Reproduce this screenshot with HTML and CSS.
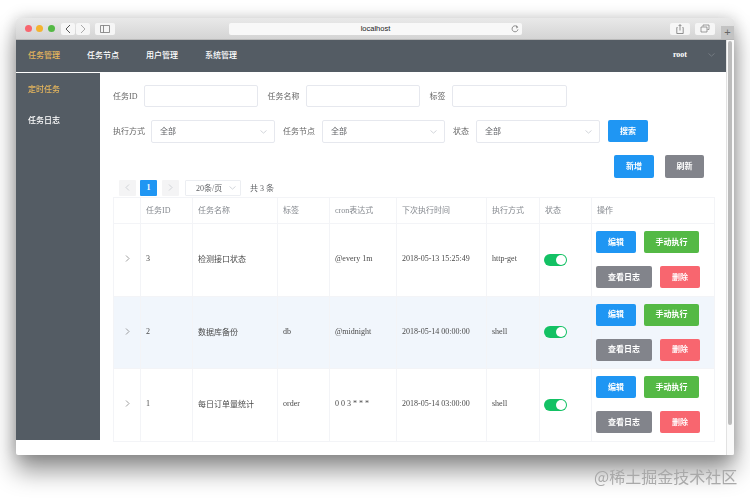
FILE: index.html
```html
<!DOCTYPE html>
<html lang="zh">
<head>
<meta charset="utf-8">
<title>localhost</title>
<link rel="stylesheet" href="styles.css">
</head>
<body>
<div class="window">
  <header class="chrome">
    <div class="lights"><i class="red"></i><i class="amber"></i><i class="green"></i></div>
    <div class="navpair">
      <span class="cbtn nb"><svg width="8" height="10" viewBox="0 0 8 10"><path d="M6 1 2 5l4 4" fill="none" stroke="#555" stroke-width="1"/></svg></span>
      <span class="cbtn nb"><svg width="8" height="10" viewBox="0 0 8 10"><path d="M2 1l4 4-4 4" fill="none" stroke="#aaa" stroke-width="1"/></svg></span>
    </div>
    <span class="cbtn sb"><svg width="10" height="8" viewBox="0 0 10 8"><path d="M.5.5h9v7h-9zM3.500.5v7" fill="none" stroke="#777" stroke-width=".8"/></svg></span>
    <div class="url"><span class="urltext">localhost</span>
      <svg class="reload" width="8" height="8" viewBox="0 0 8 8"><path d="M6.600 2.200A3 3 0 1 0 7 4.400M5 .8l1.700 1.400L5 3" fill="none" stroke="#666" stroke-width=".7"/></svg>
    </div>
    <span class="cbtn rb"><svg width="8" height="10" viewBox="0 0 8 10"><path d="M1.500 3.500H.8v6h6.400v-6h-.7M4 6.500V.8M2.600 2 4 .6 5.400 2" fill="none" stroke="#666" stroke-width=".7"/></svg></span>
    <span class="cbtn rb"><svg width="10" height="9" viewBox="0 0 10 9"><path d="M3 2.500V1h6v4.500H7.500M1 3h6v5H1z" fill="none" stroke="#777" stroke-width=".7"/></svg></span>
    <span class="plus">+</span>
  </header>
  <div class="viewport">
    <div class="app">
      <nav class="topnav">
        <a class="tab on">任务管理</a><a class="tab">任务节点</a><a class="tab">用户管理</a><a class="tab">系统管理</a>
        <span class="user">root</span>
        <svg class="userarrow" width="7" height="4" viewBox="0 0 7 4"><path d="M.5.5l3 2.600 3-2.600" fill="none" stroke="#8a9096" stroke-width=".6"/></svg>
      </nav>
      <div class="body">
        <aside class="side">
          <a class="sitem on">定时任务</a>
          <a class="sitem">任务日志</a>
        </aside>
        <main class="main">
          <div class="frow r1">
            <label>任务ID</label><span class="input w114"></span>
            <label>任务名称</label><span class="input w114"></span>
            <label>标签</label><span class="input w115"></span>
          </div>
          <div class="frow r2">
            <label>执行方式</label><span class="input sel w124"><span>全部</span><svg width="7" height="4" viewBox="0 0 7 4"><path d="M.5.5l3 2.600 3-2.600" fill="none" stroke="#c0c4cc" stroke-width=".7"/></svg></span>
            <label>任务节点</label><span class="input sel w123"><span>全部</span><svg width="7" height="4" viewBox="0 0 7 4"><path d="M.5.5l3 2.600 3-2.600" fill="none" stroke="#c0c4cc" stroke-width=".7"/></svg></span>
            <label>状态</label><span class="input sel w124"><span>全部</span><svg width="7" height="4" viewBox="0 0 7 4"><path d="M.5.5l3 2.600 3-2.600" fill="none" stroke="#c0c4cc" stroke-width=".7"/></svg></span>
            <button class="btn blue search">搜索</button>
          </div>
          <div class="actions">
            <button class="btn blue">新增</button><button class="btn gray narrow">刷新</button>
          </div>
          <div class="pager">
            <span class="pg dis"><svg width="5" height="7" viewBox="0 0 5 7"><path d="M4 .5l-3 3 3 3" fill="none" stroke="#c0c4cc" stroke-width=".7"/></svg></span>
            <span class="pg cur">1</span>
            <span class="pg dis"><svg width="5" height="7" viewBox="0 0 5 7"><path d="M1 .5l3 3-3 3" fill="none" stroke="#c0c4cc" stroke-width=".7"/></svg></span>
            <span class="size">20条/页<svg width="7" height="4" viewBox="0 0 7 4"><path d="M.5.5l3 2.600 3-2.600" fill="none" stroke="#c0c4cc" stroke-width=".7"/></svg></span>
            <span class="total">共 3 条</span>
          </div>
          <table class="grid">
            <colgroup><col class="c1"><col class="c2"><col class="c3"><col class="c4"><col class="c5"><col class="c6"><col class="c7"><col class="c8"><col class="c9"></colgroup>
            <thead><tr><th></th><th>任务ID</th><th>任务名称</th><th>标签</th><th>cron表达式</th><th>下次执行时间</th><th>执行方式</th><th>状态</th><th>操作</th></tr></thead>
            <tbody>
              <tr>
                <td class="exp"><svg width="5" height="7" viewBox="0 0 5 7"><path d="M1 .5l3 3-3 3" fill="none" stroke="#777" stroke-width=".7"/></svg></td>
                <td>3</td><td>检测接口状态</td><td></td><td>@every 1m</td><td>2018-05-13 15:25:49</td><td>http-get</td>
                <td><span class="switch"></span></td>
                <td class="ops"><div class="oprow"><button class="btn blue">编辑</button><button class="btn green">手动执行</button></div><div class="oprow"><button class="btn gray wide">查看日志</button><button class="btn red">删除</button></div></td>
              </tr>
              <tr class="hover">
                <td class="exp"><svg width="5" height="7" viewBox="0 0 5 7"><path d="M1 .5l3 3-3 3" fill="none" stroke="#777" stroke-width=".7"/></svg></td>
                <td>2</td><td>数据库备份</td><td>db</td><td>@midnight</td><td>2018-05-14 00:00:00</td><td>shell</td>
                <td><span class="switch"></span></td>
                <td class="ops"><div class="oprow"><button class="btn blue">编辑</button><button class="btn green">手动执行</button></div><div class="oprow"><button class="btn gray wide">查看日志</button><button class="btn red">删除</button></div></td>
              </tr>
              <tr>
                <td class="exp"><svg width="5" height="7" viewBox="0 0 5 7"><path d="M1 .5l3 3-3 3" fill="none" stroke="#777" stroke-width=".7"/></svg></td>
                <td>1</td><td>每日订单量统计</td><td>order</td><td>0 0 3 * * *</td><td>2018-05-14 03:00:00</td><td>shell</td>
                <td><span class="switch"></span></td>
                <td class="ops"><div class="oprow"><button class="btn blue">编辑</button><button class="btn green">手动执行</button></div><div class="oprow"><button class="btn gray wide">查看日志</button><button class="btn red">删除</button></div></td>
              </tr>
            </tbody>
          </table>
        </main>
      </div>
    </div>
    <div class="scrollbar"><span class="thumb"></span></div>
  </div>
</div>
<div class="watermark">@稀土掘金技术社区</div>
</body>
</html>
```
FILE: styles.css
```css
* { box-sizing: border-box; }
html, body { margin: 0; height: 100%; background: #fff; overflow: hidden; }
body {
  position: relative;
  padding: 18px 16px 45px 16px;
  font-family: "Liberation Serif", "Noto Sans CJK SC", serif;
  font-size: 8px;
  color: #606266;
}
.window {
  height: 437px;
  display: flex;
  flex-direction: column;
  background: #fff;
  border-radius: 3px 3px 2px 2px;
  overflow: hidden;
  box-shadow: 0 16px 24px rgba(0,0,0,.42), 0 0 16px rgba(0,0,0,.2);
  filter: blur(.3px);
}
.chrome {
  height: 22px;
  flex: none;
  display: flex;
  align-items: center;
  padding: 0 0 0 8.500px;
  background: linear-gradient(#e9e9e9, #d4d4d4);
  border-bottom: 1px solid #b9b9b9;
  position: relative;
}
.lights { display: flex; gap: 4.500px; }
.lights i { width: 7px; height: 7px; border-radius: 50%; display: block; }
.red { background: #f1514e; }
.amber { background: #f4b32f; }
.green { background: #28c840; }
.navpair { display: flex; gap: 1px; margin-left: 6.500px; }
.cbtn {
  height: 12px;
  display: flex;
  align-items: center;
  justify-content: center;
  background: #f6f6f6;
  border-radius: 2px;
}
.nb { width: 14px; }
.sb { width: 20px; margin-left: 5px; }
.url {
  width: 293px;
  height: 12px;
  margin-left: 114px;
  margin-right: 148px;
  background: #f8f8f8;
  border-radius: 2px;
  position: relative;
  display: flex;
  align-items: center;
  justify-content: center;
}
.urltext { font-family: "Liberation Sans", sans-serif; font-size: 7.500px; color: #222; }
.reload { position: absolute; right: 3px; top: 2px; }
.rb { width: 20px; margin-right: 5px; }
.plus {
  position: absolute;
  right: 0;
  top: 8px;
  width: 13px;
  height: 13px;
  background: #c3c3c3;
  color: #666;
  font: 11px/13px "Liberation Sans", sans-serif;
  text-align: center;
}
.viewport { flex: 1; display: flex; min-height: 0; }
.app { flex: 1; min-width: 0; display: flex; flex-direction: column; }
.scrollbar {
  width: 8px;
  flex: none;
  background: #fafafa;
  border-left: 1px solid #e2e2e2;
  padding: 1px 2px 0 1px;
}
.thumb { display: block; width: 4px; height: 384px; background: #bcbcbc; border-radius: 2px; }
.topnav {
  height: 32px;
  flex: none;
  display: flex;
  align-items: center;
  background: #545c64;
  color: #fff;
  padding: 0 0 3px 12px;
  gap: 27px;
  font-weight: 500;
}
.tab { display: block; width: 32px; white-space: nowrap; }
.tab.on, .sitem.on { color: #e5b65d; }
.user { margin-left: auto; margin-right: 2px; font-weight: 700; }
.userarrow { margin-right: 11px; margin-left: -8px; }
.body { flex: 1; display: flex; padding-top: 1px; min-height: 0; }
.side {
  width: 84px;
  height: 367px;
  flex: none;
  background: #545c64;
  color: #fff;
  display: flex;
  flex-direction: column;
  font-weight: 500;
}
.sitem { height: 31px; padding: 12px 0 0 12px; line-height: 10px; }
.main { flex: 1; min-width: 0; padding: 12px 0 0 13px; }
.frow { display: flex; align-items: center; }
.r1 { height: 22px; }
.r2 { height: 23px; margin-top: 13px; }
.frow label { white-space: nowrap; margin-right: 7px; color: #666; padding-bottom: 2px; }
.r2 label:first-child { margin-right: 6px; }
.input {
  height: 100%;
  display: flex;
  align-items: center;
  justify-content: space-between;
  border: 1px solid #e6e8ee;
  border-radius: 2px;
  background: #fff;
  margin-right: 8px;
}
.w114 { width: 114px; margin-right: 9px; }
.w115 { width: 115px; }
.w124 { width: 124px; }
.w123 { width: 123px; }
.sel { padding: 0 7px 0 8px; color: #606266; }
.sel span { padding-bottom: 2px; }
.btn {
  width: 40px;
  height: 23px;
  padding: 0 0 2px;
  border: 0;
  border-radius: 2px;
  color: #fff;
  font: inherit;
  font-weight: 700;
  flex: none;
}
.blue { background: #1f96f3; }
.gray { background: #82848b; }
.green { background: #54b945; width: 55px; }
.red { background: #f8666f; }
.search { height: 22px; align-self: flex-start; }
.actions { display: flex; justify-content: flex-end; gap: 11px; padding: 12px 22px 0 0; }
.narrow { width: 39px; }
.pager { display: flex; align-items: center; height: 17px; margin-top: 1px; padding-left: 6px; }
.pg {
  width: 17px;
  height: 16px;
  margin-right: 4px;
  display: flex;
  align-items: center;
  justify-content: center;
  border-radius: 1px;
  background: #f4f4f5;
}
.cur { background: #1f96f3; color: #fff; font-weight: 700; margin-right: 5px; }
.size {
  width: 56px;
  height: 16px;
  margin-left: 2px;
  padding: 0 4px 0 10px;
  display: flex;
  align-items: center;
  justify-content: space-between;
  border: 1px solid #eceef2;
  border-radius: 1px;
}
.total { margin-left: 9px; }
.grid {
  width: 601px;
  margin-top: 1px;
  table-layout: fixed;
  border-collapse: collapse;
  background: #fff;
}
.c1 { width: 27px; } .c2 { width: 52px; } .c3 { width: 85px; }
.c4 { width: 52px; } .c5 { width: 67px; } .c6 { width: 90px; }
.c7 { width: 53px; } .c8 { width: 52px; } .c9 { width: 123px; }
.grid th, .grid td {
  border: 1px solid #f3f4f7;
  padding: 0 5px 2px;
  text-align: left;
  white-space: nowrap;
  font-weight: 400;
}
.grid th { height: 26px; color: #85898f; }
.grid td { height: 72.500px; color: #4a4a4a; }
.grid td.exp { text-align: center; padding: 0; }
.grid td.ops { padding: 0 0 0 4px; }
.hover td { background: #f1f6fc; }
.switch { display: block; width: 23px; height: 12px; border-radius: 6px; background: #13c164; position: relative; top: 1px; left: -1px; }
.switch::after {
  content: "";
  position: absolute;
  right: 1px;
  top: 1px;
  width: 10px;
  height: 10px;
  border-radius: 50%;
  background: #fff;
}
.oprow { display: flex; gap: 8px; }
.oprow + .oprow { margin-top: 13px; }
.wide { width: 56px; }
.oprow .btn { height: 22px; }
.watermark {
  position: absolute;
  left: 594px;
  top: 465px;
  font-family: "Noto Sans CJK SC", sans-serif;
  font-size: 16px;
  line-height: 22px;
  color: #a9a9a9;
  white-space: nowrap;
}
```
